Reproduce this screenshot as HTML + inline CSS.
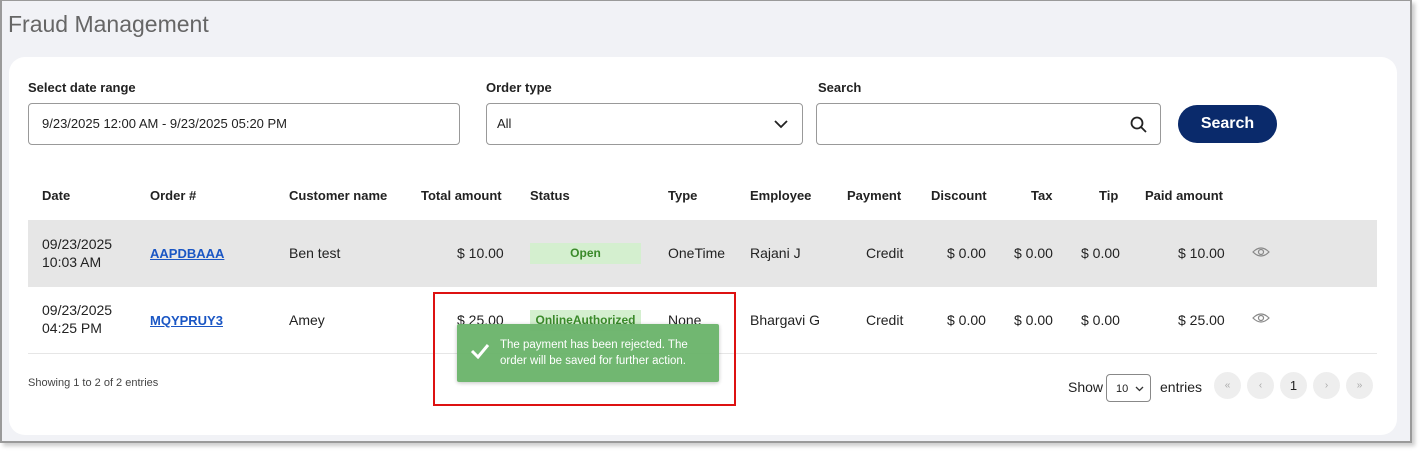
<!DOCTYPE html>
<html><head><style>
*{margin:0;padding:0;box-sizing:border-box}
body{width:1422px;height:456px;background:#fff;font-family:"Liberation Sans",Arial,sans-serif;position:relative;overflow:hidden;color:#222}
.frame{position:absolute;left:0;top:0;width:1412px;height:443px;border:2px solid #9a9a9a;border-top:1px solid #9a9a9a;background:#f1f2f6;box-shadow:3px 3px 4px #ccc}
.a{position:absolute;white-space:nowrap}
.card{position:absolute;left:9px;top:57px;width:1388px;height:378px;background:#fff;border-radius:16px}
.lbl{font-size:13px;font-weight:bold;color:#222}
.inp{position:absolute;border:1px solid #999;border-radius:4px;height:42px;background:#fff;font-size:13px;padding-left:13px;line-height:40px}
th,.h{font-size:13px;font-weight:bold}
.t{font-size:14px;color:#222}
.link{color:#1a56c4;text-decoration:underline;font-weight:bold;font-size:13px}
.pg{position:absolute;top:372px;width:27px;height:27px;border-radius:50%;background:#eee;color:#aaa;font-size:10px;text-align:center;line-height:27px}
</style></head><body>
<div class="frame"></div>
<div class="a" style="left:8px;top:11px;font-size:23px;color:#666">Fraud Management</div>
<div class="card"></div>
<div class="a lbl" style="left:28px;top:80px">Select date range</div>
<div class="a lbl" style="left:486px;top:80px">Order type</div>
<div class="a lbl" style="left:818px;top:80px">Search</div>
<div class="inp" style="left:28px;top:103px;width:432px">9/23/2025 12:00 AM - 9/23/2025 05:20 PM</div>
<div class="inp" style="left:486px;top:103px;width:317px;padding-left:10px">All
<svg style="position:absolute;right:14px;top:16px" width="14" height="9" viewBox="0 0 14 9"><path d="M1 1l6 6 6-6" stroke="#222" stroke-width="1.8" fill="none"/></svg></div>
<div class="inp" style="left:816px;top:103px;width:345px">
<svg style="position:absolute;right:13px;top:12px" width="17" height="17" viewBox="0 0 17 17"><circle cx="7" cy="7" r="5.5" stroke="#222" stroke-width="1.8" fill="none"/><path d="M11 11l5 5" stroke="#222" stroke-width="1.8"/></svg></div>
<div class="a" style="left:1178px;top:105px;width:99px;height:38px;border-radius:19px;background:#0a2a6b;color:#fff;font-weight:bold;font-size:16px;text-align:center;line-height:38px">Search</div>

<div class="a h" style="left:42px;top:188px">Date</div>
<div class="a h" style="left:150px;top:188px">Order #</div>
<div class="a h" style="left:289px;top:188px">Customer name</div>
<div class="a h" style="left:421px;top:188px">Total amount</div>
<div class="a h" style="left:530px;top:188px">Status</div>
<div class="a h" style="left:668px;top:188px">Type</div>
<div class="a h" style="left:750px;top:188px">Employee</div>
<div class="a h" style="left:847px;top:188px">Payment</div>
<div class="a h" style="left:931px;top:188px">Discount</div>
<div class="a h" style="left:1031px;top:188px">Tax</div>
<div class="a h" style="left:1099px;top:188px">Tip</div>
<div class="a h" style="left:1145px;top:188px">Paid amount</div>

<div class="a" style="left:28px;top:220px;width:1349px;height:67px;background:#e6e6e6"></div>
<div class="a" style="left:28px;top:353px;width:1349px;height:1px;background:#e6e6e6"></div>

<div class="a t" style="left:42px;top:235px;line-height:18px">09/23/2025<br>10:03 AM</div>
<div class="a link" style="left:150px;top:246px">AAPDBAAA</div>
<div class="a t" style="left:289px;top:245px">Ben test</div>
<div class="a t" style="left:457px;top:245px">$ 10.00</div>
<div class="a" style="left:530px;top:243px;width:111px;height:21px;background:#d4efcf;color:#3a8a2a;font-size:12px;font-weight:bold;text-align:center;line-height:21px">Open</div>
<div class="a t" style="left:668px;top:245px">OneTime</div>
<div class="a t" style="left:750px;top:245px">Rajani J</div>
<div class="a t" style="left:866px;top:245px">Credit</div>
<div class="a t" style="left:947px;top:245px">$ 0.00</div>
<div class="a t" style="left:1014px;top:245px">$ 0.00</div>
<div class="a t" style="left:1081px;top:245px">$ 0.00</div>
<div class="a t" style="left:1178px;top:245px">$ 10.00</div>

<div class="a t" style="left:42px;top:301px;line-height:18px">09/23/2025<br>04:25 PM</div>
<div class="a link" style="left:150px;top:313px">MQYPRUY3</div>
<div class="a t" style="left:289px;top:312px">Amey</div>
<div class="a t" style="left:457px;top:312px">$ 25.00</div>
<div class="a" style="left:530px;top:310px;width:111px;height:21px;background:#d4efcf;color:#3a8a2a;font-size:12px;font-weight:bold;text-align:center;line-height:21px">OnlineAuthorized</div>
<div class="a t" style="left:668px;top:312px">None</div>
<div class="a t" style="left:750px;top:312px">Bhargavi G</div>
<div class="a t" style="left:866px;top:312px">Credit</div>
<div class="a t" style="left:947px;top:312px">$ 0.00</div>
<div class="a t" style="left:1014px;top:312px">$ 0.00</div>
<div class="a t" style="left:1081px;top:312px">$ 0.00</div>
<div class="a t" style="left:1178px;top:312px">$ 25.00</div>

<svg class="a" style="left:1252px;top:246px" width="18" height="12" viewBox="0 0 18 12"><path d="M1 6Q9-2 17 6Q9 14 1 6Z" stroke="#888" fill="none" stroke-width="1.2"/><circle cx="9" cy="6" r="2.5" stroke="#888" fill="none" stroke-width="1.2"/></svg>
<svg class="a" style="left:1252px;top:312px" width="18" height="12" viewBox="0 0 18 12"><path d="M1 6Q9-2 17 6Q9 14 1 6Z" stroke="#888" fill="none" stroke-width="1.2"/><circle cx="9" cy="6" r="2.5" stroke="#888" fill="none" stroke-width="1.2"/></svg>

<div class="a" style="left:457px;top:324px;width:262px;height:58px;background:#6db56d;border-radius:2px;box-shadow:0 1px 4px rgba(0,0,0,.25);opacity:.97"></div>
<svg class="a" style="left:470px;top:343px" width="20" height="16" viewBox="0 0 20 16"><path d="M2 8l6 6L18 2" stroke="#fff" stroke-width="3" fill="none"/></svg>
<div class="a" style="left:500px;top:337px;color:#fff;font-size:11.5px;line-height:16px">The payment has been rejected. The<br>order will be saved for further action.</div>
<div class="a" style="left:433px;top:292px;width:303px;height:114px;border:2px solid #d11"></div>

<div class="a" style="left:28px;top:377px;font-size:11px;color:#444">Showing 1 to 2 of 2 entries</div>
<div class="a t" style="left:1068px;top:379px">Show</div>
<div class="a" style="left:1106px;top:374px;width:45px;height:28px;border:1px solid #888;border-radius:4px;font-size:11px;padding:8px 0 0 9px">10
<svg style="position:absolute;right:6px;top:11px" width="9" height="6" viewBox="0 0 9 6"><path d="M1 1l3.5 3.5L8 1" stroke="#333" stroke-width="1.3" fill="none"/></svg></div>
<div class="a t" style="left:1160px;top:379px">entries</div>
<div class="pg" style="left:1214px">«</div>
<div class="pg" style="left:1247px">‹</div>
<div class="pg" style="left:1280px;color:#222;font-size:13px">1</div>
<div class="pg" style="left:1313px">›</div>
<div class="pg" style="left:1346px">»</div>
</body></html>
